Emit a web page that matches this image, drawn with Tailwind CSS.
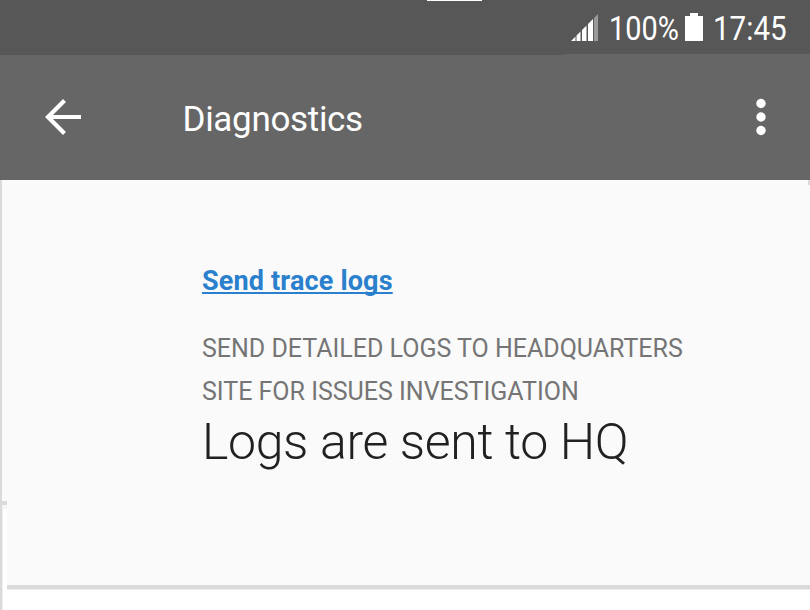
<!DOCTYPE html>
<html lang="en"><head><meta charset="utf-8"><title>Diagnostics</title>
<script src="https://cdn.jsdelivr.net/npm/@tailwindcss/browser@4"></script></head>
<body class="w-[810px] h-[610px] overflow-hidden bg-white font-['Roboto',sans-serif]">
<div class="relative h-full flex flex-col">
<header class="relative h-[55px] bg-[#575757] text-white flex items-center justify-end pr-[22px] text-[34px] leading-none">
<div class="absolute top-0 left-[427px] w-[55px] h-px bg-white"></div>
<div class="absolute bottom-0 right-0 w-[245px] h-px bg-[#666]"></div>
<svg class="w-[28px] h-[28px] mr-[10px] -mt-px" viewBox="0 0 28 28" fill="white"><path d="M0 28L4.500 23.500V28ZM5.500 28V22.500L9.500 18.500V28ZM11 28V17L15.500 12.500V28ZM17 28V11L22 6V28Z"/><path d="M23 28V5L27 1V28Z" fill="#999"/></svg>
<span class="inline-block w-[71px]"><span class="inline-block origin-left scale-x-[.85]">100%</span></span>
<svg class="w-[18px] h-[28px] ml-[5px] mr-[10px] -mt-px" viewBox="0 0 18 28" fill="white"><path d="M5 0H13V3H18V28H0V3H5Z"/></svg>
<span class="inline-block w-[75px]"><span class="inline-block origin-left scale-x-[.87]">17:45</span></span>
</header>
<nav class="h-[125px] bg-[#666] text-white flex items-center">
<svg class="w-[38px] h-[38px] ml-[44px] -mt-px" viewBox="0 0 38 38" fill="none" stroke="white" stroke-width="4.200"><path d="M37 19H4M20.500 2.500L4 19L20.500 35.500"/></svg>
<h1 class="ml-[100.5px] mt-[3px] text-[35px] leading-none tracking-[-0.32px]">Diagnostics</h1>
<svg class="w-[10px] h-[38px] ml-auto mr-[44.5px] -mt-px" viewBox="0 0 10 38" fill="white"><circle cx="5" cy="5.500" r="4.700"/><circle cx="5" cy="19" r="4.700"/><circle cx="5" cy="32.500" r="4.700"/></svg>
</nav>
<div class="flex-1 flex">
<div class="w-[2px] bg-[#dadada]"></div>
<div class="w-[5px] flex flex-col">
<div class="h-[321px] bg-[#fafafa]"></div>
<div class="h-[4px] bg-[#dadada]"></div>
<div class="h-[4px] bg-[#f5f5f5]"></div>
<div class="flex-1 border-l border-[#f0f0f0]"></div>
</div>
<div class="flex-1 flex flex-col">
<main class="relative h-[405px] pl-[195px] pt-[81px] bg-[#fafafa]">
<div class="absolute right-0 top-0 w-[2px] h-[5px] bg-[#dadada]"></div>
<a class="block text-[27px] leading-[40px] font-bold tracking-[.16px] underline [text-decoration-skip-ink:none] decoration-[1.500px] underline-offset-[2px] text-[#2a80cc]">Send trace logs</a>
<p class="mt-[26px] text-[25px] leading-[43px] tracking-[-0.01px] text-[#757575]">SEND DETAILED LOGS TO HEADQUARTERS<br>SITE FOR ISSUES INVESTIGATION</p>
<p class="text-[50px] leading-[58px] tracking-[-0.35px] font-light text-[#212121]">Logs are sent to HQ</p>
</main>
<div class="h-[5px] bg-[#dadada] border-b border-[#ededed]"></div>
</div>
</div></div></body></html>
